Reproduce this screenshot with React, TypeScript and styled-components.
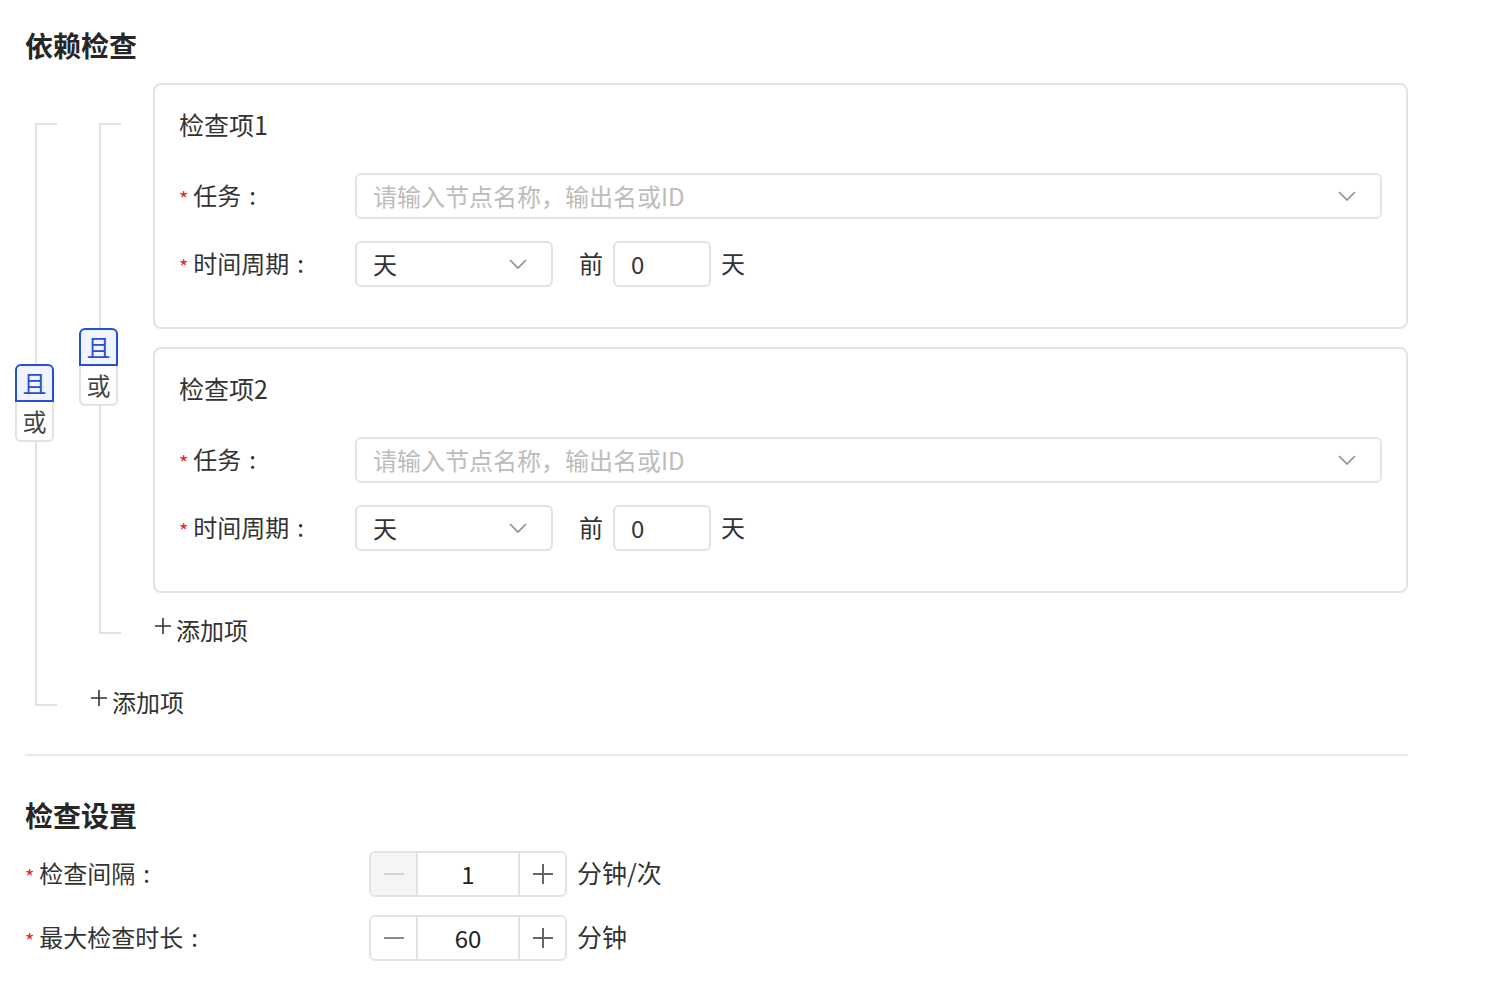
import React from "react";
import styled, { createGlobalStyle } from "styled-components";

const GlobalStyle = createGlobalStyle`
  body {
    margin: 0;
    background: #fff;
    font-family: "Noto Sans CJK SC", "Noto Sans", sans-serif;
    color: #333;
  }
`;

const Page = styled.div`
  width: 1383px;
  padding: 27px 25px 28px;
`;

const SectionTitle = styled.h2`
  margin: 0;
  font-size: 28px;
  line-height: 36px;
  font-weight: 700;
  color: #262626;
`;

const GroupWrap = styled.div<{ $nested?: boolean }>`
  display: flex;
  margin-top: ${p => (p.$nested ? "0" : "20px")};
  margin-bottom: ${p => (p.$nested ? "14px" : "0")};
`;

const Bracket = styled.div`
  position: relative;
  flex: 0 0 64px;
  display: flex;
  flex-direction: column;
`;

const BracketLine = styled.div`
  flex: 1;
  width: 22px;
  box-sizing: border-box;
  margin: 40px 0 17px 10px;
  border: 2px solid #e3e3e3;
  border-right: none;
`;

const Toggle = styled.div`
  position: absolute;
  left: -10px;
  top: 50%;
  transform: translateY(-50%);
  width: 39px;
  display: flex;
  flex-direction: column;
`;

const ToggleOpt = styled.div<{ $active?: boolean }>`
  box-sizing: border-box;
  height: ${p => (p.$active ? "38px" : "40px")};
  display: flex;
  align-items: center;
  justify-content: center;
  padding-bottom: 2px;
  font-size: 24px;
  background: ${p => (p.$active ? "#f1f4ff" : "#fff")};
  color: ${p => (p.$active ? "#2450d6" : "#444")};
  border: 2px solid ${p => (p.$active ? "#2450d6" : "#e3e3e3")};
  border-top: ${p => (p.$active ? "2px solid #2450d6" : "none")};
  border-radius: ${p => (p.$active ? "6px 6px 0 0" : "0 0 6px 6px")};
`;

const GroupBody = styled.div`
  flex: 1;
  display: flex;
  flex-direction: column;
  gap: 18px;
  min-width: 0;
`;

const AddRow = styled.div`
  height: 40px;
  display: flex;
  align-items: center;
  gap: 5px;
  padding: 0 0 3px 2px;
  box-sizing: border-box;
  font-size: 24px;
  color: #333;
  cursor: pointer;

  svg {
    margin-bottom: 8px;
  }
`;

const Card = styled.div`
  border: 2px solid #e3e3e3;
  border-radius: 8px;
  padding: 22px 24px 40px;
  display: flex;
  flex-direction: column;
`;

const CardTitle = styled.div`
  font-size: 25px;
  line-height: 34px;
  color: #333;
  margin-bottom: 32px;
`;

const FormRow = styled.div`
  display: flex;
  align-items: center;
  height: 46px;

  & + & {
    margin-top: 22px;
  }
`;

const Label = styled.div<{ $width: number }>`
  flex: 0 0 ${p => p.$width}px;
  display: flex;
  align-items: center;
  padding-bottom: 3px;
  font-size: 24px;
  color: #333;
`;

const Star = styled.span`
  color: #e5242b;
  font-size: 20px;
  margin-right: 5px;
  position: relative;
  top: 4px;
`;

const Colon = styled.span`
  margin-left: 8px;
`;

const Field = styled.div<{ $width?: number }>`
  box-sizing: border-box;
  ${p => (p.$width ? `flex: 0 0 ${p.$width}px;` : "flex: 1;")}
  height: 46px;
  border: 2px solid #e3e3e3;
  border-radius: 6px;
  padding: 0 24px 2px 16px;
  display: flex;
  align-items: center;
  justify-content: space-between;
  font-size: 24px;
  color: #333;

  svg {
    margin-top: 2px;
  }
`;

const Placeholder = styled.span`
  color: #bcbcbc;
`;

const Word = styled.span<{ $gap: number }>`
  font-size: 24px;
  color: #333;
  margin: 0 10px 4px ${p => p.$gap}px;
`;

const SettingRow = styled.div`
  display: flex;
  align-items: center;
  height: 46px;
  margin-top: 18px;
`;

const Stepper = styled.div`
  box-sizing: border-box;
  flex: 0 0 198px;
  height: 46px;
  display: flex;
  border: 2px solid #e3e3e3;
  border-radius: 6px;
  overflow: hidden;
`;

const StepBtn = styled.div<{ $disabled?: boolean }>`
  flex: 0 0 45px;
  display: flex;
  align-items: center;
  justify-content: center;
  background: ${p => (p.$disabled ? "#f5f5f5" : "#fff")};
  color: ${p => (p.$disabled ? "#c8c8c8" : "#666")};
`;

const StepValue = styled.div`
  flex: 1;
  display: flex;
  align-items: center;
  justify-content: center;
  padding-bottom: 2px;
  border-left: 2px solid #e3e3e3;
  border-right: 2px solid #e3e3e3;
  font-size: 24px;
  color: #222;
`;

const Unit = styled.span`
  margin: 0 0 4px 10px;
  font-size: 25px;
  color: #333;
`;

const Divider = styled.div`
  height: 2px;
  background: #e8e8e8;
  margin: 31px 0 41px;
`;

const Chevron = () => (
  <svg width="18" height="10" viewBox="0 0 18 10" fill="none">
    <path d="M1 1l8 8 8-8" stroke="#8a8a8a" strokeWidth="1.6" />
  </svg>
);

const Plus = ({ size = 16 }: { size?: number }) => (
  <svg width={size} height={size} viewBox="0 0 16 16" fill="none">
    <path d="M8 0v16M0 8h16" stroke="currentColor" strokeWidth="1.6" />
  </svg>
);

const Minus = () => (
  <svg width="20" height="20" viewBox="0 0 20 20" fill="none">
    <path d="M0 10h20" stroke="currentColor" strokeWidth="1.6" />
  </svg>
);

type GroupProps = { nested?: boolean; children: React.ReactNode };

const Group: React.FC<GroupProps> = ({ nested, children }) => (
  <GroupWrap $nested={nested}>
    <Bracket>
      <BracketLine />
      <Toggle>
        <ToggleOpt $active>且</ToggleOpt>
        <ToggleOpt>或</ToggleOpt>
      </Toggle>
    </Bracket>
    <GroupBody>
      {children}
      <AddRow>
        <Plus />
        添加项
      </AddRow>
    </GroupBody>
  </GroupWrap>
);

const CheckCard: React.FC<{ index: number }> = ({ index }) => (
  <Card>
    <CardTitle>检查项{index}</CardTitle>
    <FormRow>
      <Label $width={176}>
        <Star>*</Star>任务<Colon>:</Colon>
      </Label>
      <Field>
        <Placeholder>请输入节点名称，输出名或ID</Placeholder>
        <Chevron />
      </Field>
    </FormRow>
    <FormRow>
      <Label $width={176}>
        <Star>*</Star>时间周期<Colon>:</Colon>
      </Label>
      <Field $width={198}>
        天
        <Chevron />
      </Field>
      <Word $gap={26}>前</Word>
      <Field $width={98}>0</Field>
      <Word $gap={10}>天</Word>
    </FormRow>
  </Card>
);

const settings = [
  { label: "检查间隔", value: "1", unit: "分钟/次", minDisabled: true },
  { label: "最大检查时长", value: "60", unit: "分钟", minDisabled: false },
];

const App: React.FC = () => (
  <>
    <GlobalStyle />
    <Page>
      <SectionTitle>依赖检查</SectionTitle>
      <Group>
        <Group nested>
          <CheckCard index={1} />
          <CheckCard index={2} />
        </Group>
      </Group>
      <Divider />
      <SectionTitle>检查设置</SectionTitle>
      {settings.map(s => (
        <SettingRow key={s.label}>
          <Label $width={344}>
            <Star>*</Star>
            {s.label}
            <Colon>:</Colon>
          </Label>
          <Stepper>
            <StepBtn $disabled={s.minDisabled}>
              <Minus />
            </StepBtn>
            <StepValue>{s.value}</StepValue>
            <StepBtn>
              <Plus size={20} />
            </StepBtn>
          </Stepper>
          <Unit>{s.unit}</Unit>
        </SettingRow>
      ))}
    </Page>
  </>
);

export default App;
